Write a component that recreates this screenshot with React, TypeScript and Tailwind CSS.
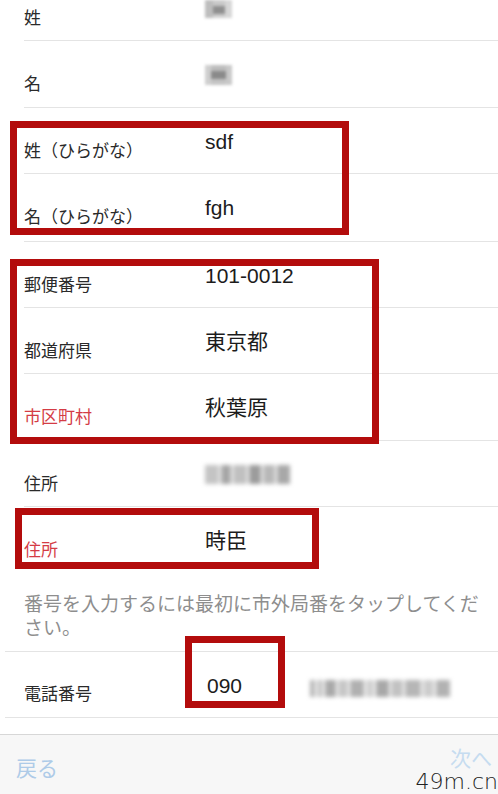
import React from "react";

const jp = { fontFamily: '"Noto Sans CJK JP", "Noto Sans", sans-serif' };
const val = { fontFamily: '"Liberation Sans", "Noto Sans CJK JP", sans-serif' };

function Row({
  h,
  label,
  red,
  labelTop,
  value,
  blur,
  border = true,
}: {
  h: string;
  label: string;
  red?: boolean;
  labelTop?: string;
  value?: string;
  blur?: React.ReactNode;
  border?: boolean;
}) {
  return (
    <div className={`pl-6 ${h}`}>
      <div className={`flex h-full ${border ? "border-b border-[#e4e4e4]" : ""}`}>
        <div
          className={`w-[181px] shrink-0 text-[17px] leading-[20px] ${labelTop ?? "mt-[32px]"} ${
            red ? "text-[#d43c45]" : "text-[#2a2a2a]"
          }`}
          style={jp}
        >
          {label}
        </div>
        {value && (
          <div className="mt-[22px] text-[21px] leading-[24px] text-[#1c1c1c]" style={val}>
            {value}
          </div>
        )}
        {blur}
      </div>
    </div>
  );
}

export default function App() {
  return (
    <div className="relative w-[498px] h-[794px] overflow-hidden bg-white flex flex-col">
      <Row
        h="h-[41px]"
        label="姓"
        labelTop="mt-[7px]"
        blur={
          <div className="h-[18px] w-[27px] flex blur-[1.5px]">
            <div className="w-[8px] bg-[#bdbdbd]" />
            <div className="w-[12px] flex flex-col">
              <div className="h-[6px] bg-[#c9c9c9]" />
              <div className="h-[8px] bg-[#8f8f8f]" />
              <div className="h-[4px] bg-[#cfcfcf]" />
            </div>
            <div className="w-[7px] bg-[#d6d6d6]" />
          </div>
        }
      />
      <Row
        h="h-[67px]"
        label="名"
        blur={
          <div className="mt-[24px] h-[20px] w-[27px] flex blur-[1.5px]">
            <div className="w-[6px] bg-[#cfcfcf]" />
            <div className="w-[15px] flex flex-col">
              <div className="h-[6px] bg-[#bdbdbd]" />
              <div className="h-[8px] bg-[#8a8a8a]" />
              <div className="h-[6px] bg-[#c4c4c4]" />
            </div>
            <div className="w-[6px] bg-[#c8c8c8]" />
          </div>
        }
      />
      <Row h="h-[66px]" label="姓（ひらがな）" value="sdf" />
      <Row h="h-[68px]" label="名（ひらがな）" value="fgh" />
      <Row h="h-[66px]" label="郵便番号" value="101-0012" />
      <Row h="h-[66px]" label="都道府県" value="東京都" />
      <Row h="h-[67px]" label="市区町村" red value="秋葉原" />
      <Row
        h="h-[66px]"
        label="住所"
        blur={
          <div className="mt-[24px] h-[19px] w-[92px] flex gap-[2px] blur-[2px]">
            <div className="w-[14px] bg-[#c4c4c4]" />
            <div className="w-[10px] bg-[#a6a6a6]" />
            <div className="w-[14px] bg-[#c0c0c0]" />
            <div className="w-[12px] bg-[#9c9c9c]" />
            <div className="w-[12px] bg-[#b8b8b8]" />
            <div className="w-[13px] bg-[#a8a8a8]" />
          </div>
        }
      />
      <Row h="h-[67px]" label="住所" red value="時臣" border={false} />

      <div
        className="mt-[17px] pl-6 pr-2 text-[19px] leading-[24px] text-[#8e8e8e]"
        style={jp}
      >
        番号を入力するには最初に市外局番をタップしてください。
      </div>

      <div className="mt-[12px] ml-[5px] h-[67px] border-y border-[#e4e4e4] flex">
        <div className="pl-[19px] w-[202px] shrink-0 mt-[31px] text-[17px] leading-[20px] text-[#2a2a2a]" style={jp}>
          電話番号
        </div>
        <div className="w-[103px] shrink-0 mt-[22px] text-[21px] leading-[24px] text-[#1c1c1c]" style={val}>
          090
        </div>
        <div className="mt-[28px] h-[17px] w-[140px] flex gap-[2px] blur-[2px]">
          <div className="w-[5px] bg-[#b5b5b5]" />
          <div className="w-[6px] bg-[#c8c8c8]" />
          <div className="w-[12px] bg-[#a9a9a9]" />
          <div className="w-[10px] bg-[#c6c6c6]" />
          <div className="w-[14px] bg-[#b0b0b0]" />
          <div className="w-[8px] bg-[#d0d0d0]" />
          <div className="w-[14px] bg-[#a8a8a8]" />
          <div className="w-[12px] bg-[#c2c2c2]" />
          <div className="w-[16px] bg-[#b6b6b6]" />
          <div className="w-[12px] bg-[#cdcdcd]" />
          <div className="w-[14px] bg-[#b2b2b2]" />
        </div>
      </div>

      <div className="mt-[16px] flex-1 border-t border-[#d7d7d7] bg-[#f7f7f7] flex justify-between items-start">
        <div className="ml-[16px] mt-[20px] text-[21px] leading-[24px] text-[#aecbe8]" style={jp}>
          戻る
        </div>
        <div className="mr-[6px] mt-[10px] text-[21px] leading-[24px] text-[#c6dcf0]" style={jp}>
          次へ
        </div>
      </div>

      <div
        className="absolute right-0 bottom-0 text-[22px] leading-[24px] font-light text-[#222]"
        style={{ fontFamily: '"DejaVu Sans", sans-serif' }}
      >
        49m.cn
      </div>

      <div className="absolute left-[10px] top-[121px] w-[339px] h-[114px] border-[7px] border-[#b30c0c]" />
      <div className="absolute left-[10px] top-[259px] w-[369px] h-[185px] border-[7px] border-[#b30c0c]" />
      <div className="absolute left-[15px] top-[508px] w-[304px] h-[61px] border-[7px] border-[#b30c0c]" />
      <div className="absolute left-[185px] top-[636px] w-[100px] h-[72px] border-[7px] border-[#b30c0c]" />
    </div>
  );
}
